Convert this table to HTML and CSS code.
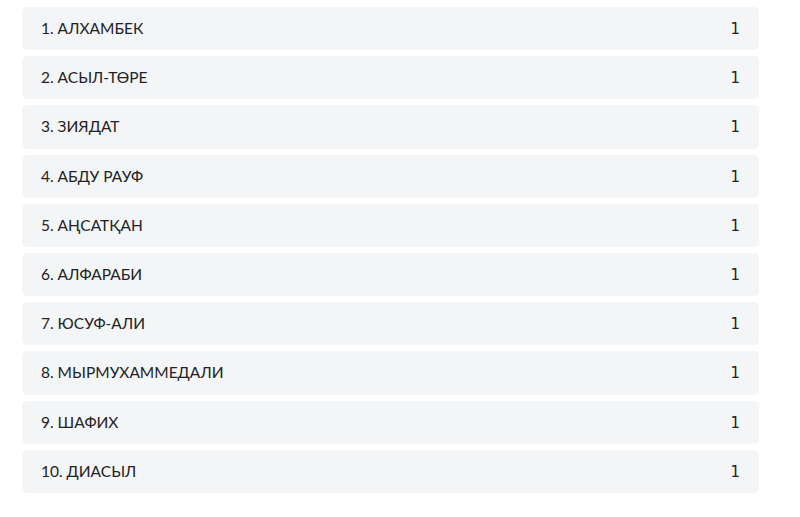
FILE: index.html
```html
<!DOCTYPE html>
<html>
<head>
<meta charset="utf-8">
<link rel="stylesheet" href="styles.css">
</head>
<body>
<ul class="list">
  <li class="row"><span class="name">1. АЛХАМБЕК</span><span class="count">1</span></li>
  <li class="row"><span class="name">2. АСЫЛ-ТӨРЕ</span><span class="count">1</span></li>
  <li class="row"><span class="name">3. ЗИЯДАТ</span><span class="count">1</span></li>
  <li class="row"><span class="name">4. АБДУ РАУФ</span><span class="count">1</span></li>
  <li class="row"><span class="name">5. АҢСАТҚАН</span><span class="count">1</span></li>
  <li class="row"><span class="name">6. АЛФАРАБИ</span><span class="count">1</span></li>
  <li class="row"><span class="name">7. ЮСУФ-АЛИ</span><span class="count">1</span></li>
  <li class="row"><span class="name">8. МЫРМУХАММЕДАЛИ</span><span class="count">1</span></li>
  <li class="row"><span class="name">9. ШАФИХ</span><span class="count">1</span></li>
  <li class="row"><span class="name">10. ДИАСЫЛ</span><span class="count">1</span></li>
</ul>
</body>
</html>
```
FILE: styles.css
```css
html, body {
  margin: 0;
  padding: 0;
  background: #ffffff;
}
.list {
  list-style: none;
  margin: 0;
  padding: 7px 41px 0 22px;
  display: flex;
  flex-direction: column;
  gap: 6px;
}
.row {
  height: 43.2px;
  box-sizing: border-box;
  background: #f4f5f7;
  border-radius: 5px;
  display: flex;
  align-items: baseline;
  justify-content: space-between;
  padding: 11px 19px 0 19px;
  line-height: 20px;
  color: #222326;
}
.name {
  font-family: Lato, "Noto Sans", sans-serif;
  font-size: 15.5px;
}
.count {
  font-family: "DejaVu Sans", sans-serif;
  font-size: 15px;
}
```
